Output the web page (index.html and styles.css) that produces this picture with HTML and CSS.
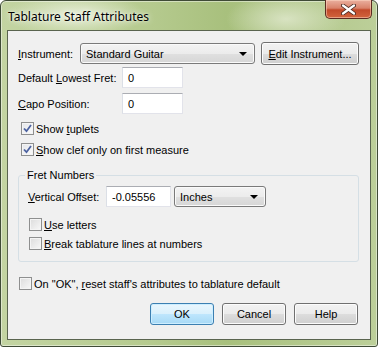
FILE: index.html
```html
<!DOCTYPE html>
<html lang="en">
<head>
    <meta charset="UTF-8">
    <meta name="viewport" content="width=device-width, initial-scale=1.0">
    <title>Tablature Staff Attributes</title>
    <link rel="stylesheet" href="styles.css">
</head>
<body>
    <div class="window">
        <div class="titlebar">
            <span class="title">Tablature Staff Attributes</span>
            <div class="close">
                <svg width="15" height="11" viewBox="0 0 15 11">
                    <path d="M2 1.5 L13 9.5 M13 1.5 L2 9.5" stroke="#4a2a22" stroke-width="4" stroke-linecap="round"/>
                    <path d="M2 1.5 L13 9.5 M13 1.5 L2 9.5" stroke="#ffffff" stroke-width="2.2" stroke-linecap="round"/>
                </svg>
            </div>
        </div>

        <div class="client">
            <div class="row row-top">
                <span class="label"><u>I</u>nstrument:</span>
                <div class="combo combo-instrument">
                    <span>Standard Guitar</span>
                    <i class="arrow"></i>
                </div>
                <div class="btn btn-edit"><u>E</u>dit Instrument...</div>
            </div>

            <div class="row row-field first-field">
                <span class="label label-wide">Default <u>L</u>owest Fret:</span>
                <div class="textbox">0</div>
            </div>
            <div class="row row-field second-field">
                <span class="label label-wide"><u>C</u>apo Position:</span>
                <div class="textbox">0</div>
            </div>

            <div class="check check-tuplets">
                <span class="box checked">
                    <svg width="9" height="9" viewBox="0 0 9 9"><path d="M1 4.5 L3.5 7.2 L8 1" fill="none" stroke="#4c62a0" stroke-width="1.8"/></svg>
                </span>
                <span>Show <u>t</u>uplets</span>
            </div>
            <div class="check check-clef">
                <span class="box checked">
                    <svg width="9" height="9" viewBox="0 0 9 9"><path d="M1 4.5 L3.5 7.2 L8 1" fill="none" stroke="#4c62a0" stroke-width="1.8"/></svg>
                </span>
                <span><u>S</u>how clef only on first measure</span>
            </div>

            <fieldset class="group">
                <legend>Fret Numbers</legend>
                <div class="row row-offset">
                    <span class="label label-offset"><u>V</u>ertical Offset:</span>
                    <div class="textbox textbox-offset">-0.05556</div>
                    <div class="combo combo-units">
                        <span>Inches</span>
                        <i class="arrow"></i>
                    </div>
                </div>
                <div class="check check-letters">
                    <span class="box"></span>
                    <span><u>U</u>se letters</span>
                </div>
                <div class="check check-break">
                    <span class="box"></span>
                    <span><u>B</u>reak tablature lines at numbers</span>
                </div>
            </fieldset>

            <div class="check check-reset">
                <span class="box"></span>
                <span>On "OK", <u>r</u>eset staff's attributes to tablature default</span>
            </div>

            <div class="buttons">
                <div class="btn btn-default">OK</div>
                <div class="btn">Cancel</div>
                <div class="btn">Help</div>
            </div>
        </div>
    </div>
</body>
</html>
```

FILE: styles.css
```css
body {
    margin: 0;
    padding: 0;
    font-family: "Liberation Sans", Arial, sans-serif;
    font-size: 11px;
    color: #000;
    background: #ffffff;
}
u {
    text-decoration: underline;
    text-underline-offset: 1px;
}
.window {
    position: relative;
    width: 378px;
    height: 347px;
    box-sizing: border-box;
    border: 1px solid #3f4b36;
    border-radius: 6px 6px 3px 3px;
    padding: 0 6px 6px 6px;
    background:
        radial-gradient(ellipse 70px 22px at 75px 14px, rgba(236, 242, 222, 0.9), rgba(236, 242, 222, 0) 100%),
        radial-gradient(ellipse 60px 26px at 285px 18px, rgba(226, 234, 208, 0.8), rgba(226, 234, 208, 0) 100%),
        linear-gradient(90deg, #c3d4a2 0%, #b5ca8e 40%, #a8c07d 60%, #bccf99 100%);
    box-shadow: inset 0 0 0 1px rgba(255, 255, 255, 0.45);
}
.titlebar {
    height: 29px;
    display: flex;
    align-items: center;
}
.title {
    font-family: "Noto Sans", "Open Sans", sans-serif;
    font-size: 12px;
    margin-left: 1px;
    margin-top: 1px;
    text-shadow: 0 0 6px rgba(255, 255, 255, 0.9), 0 0 2px rgba(255, 255, 255, 0.8);
}
.close {
    position: absolute;
    top: -1px;
    right: 5px;
    width: 45px;
    height: 18px;
    border: 1px solid #5b2b20;
    border-top: none;
    border-radius: 0 0 5px 5px;
    background: linear-gradient(#eab09f 0%, #d9826a 45%, #c24a2a 55%, #d2643d 100%);
    box-shadow: inset 0 0 0 1px rgba(255, 220, 200, 0.5);
    display: flex;
    align-items: center;
    justify-content: center;
}
.client {
    height: 308px;
    border: 1px solid #59644f;
    background: #f0f0f0;
    padding: 11px 0 0 0;
    box-sizing: content-box;
    height: 297px;
}
.row {
    display: flex;
    align-items: center;
}
.label {
    margin-left: 10px;
}
.row-top {
    height: 23px;
}
.row-top .label {
    width: 62px;
}
.combo {
    box-sizing: border-box;
    height: 21px;
    border: 1px solid #7a7a7a;
    border-radius: 3px;
    background: linear-gradient(#f3f3f3 0%, #ececec 50%, #e0e0e0 51%, #d6d6d6 100%);
    box-shadow: inset 0 0 0 1px #fafafa;
    display: flex;
    align-items: center;
    justify-content: space-between;
    padding: 0 7px 0 5px;
}
.combo-instrument {
    width: 175px;
}
.arrow {
    width: 0;
    height: 0;
    border-left: 4px solid transparent;
    border-right: 4px solid transparent;
    border-top: 4px solid #000;
}
.btn {
    box-sizing: border-box;
    height: 23px;
    border: 1px solid #707070;
    border-radius: 3px;
    background: linear-gradient(#f2f2f2 0%, #ebebeb 50%, #dddddd 51%, #cfcfcf 100%);
    box-shadow: inset 0 0 0 1px #fcfcfc;
    display: flex;
    align-items: center;
    justify-content: center;
}
.btn-edit {
    width: 98px;
    margin-left: 6px;
}
.row-field {
    height: 21px;
}
.first-field {
    margin-top: 2px;
}
.second-field {
    margin-top: 5px;
}
.label-wide {
    width: 104px;
}
.textbox {
    box-sizing: border-box;
    width: 61px;
    height: 21px;
    background: #ffffff;
    border: 1px solid #e2e3ea;
    border-top-color: #abadb3;
    border-left-color: #dbdfe6;
    display: flex;
    align-items: center;
    padding-left: 5px;
}
.check {
    display: flex;
    align-items: center;
    height: 17px;
}
.box {
    box-sizing: border-box;
    width: 13px;
    height: 13px;
    border: 1px solid #8e8f8f;
    background: linear-gradient(135deg, #dcdcdc 0%, #f8f8f8 100%);
    box-shadow: inset 0 0 0 1px #f4f4f4;
    margin-right: 2px;
    display: flex;
    align-items: center;
    justify-content: center;
}
.box.checked {
    background: linear-gradient(135deg, #e4e6ea 0%, #fbfbfb 100%);
}
.check-tuplets {
    margin-top: 6px;
    padding-left: 13px;
}
.check-clef {
    margin-top: 4px;
    padding-left: 13px;
}
.group {
    margin: 10px 10px 0 10px;
    padding: 4px 0 9px 0;
    width: 341px;
    box-sizing: border-box;
    border: 1px solid #d5dfe5;
    border-radius: 3px;
    min-width: 0;
}
.group legend {
    margin-left: 6px;
    padding: 0 2px;
    line-height: 14px;
}
.row-offset {
    height: 21px;
}
.label-offset {
    width: 78px;
    margin-left: 9px;
}
.textbox-offset {
    width: 65px;
}
.combo-units {
    width: 92px;
    margin-left: 3px;
}
.check-letters {
    margin-top: 9px;
    padding-left: 10px;
}
.check-break {
    margin-top: 2px;
    padding-left: 10px;
}
.check-reset {
    margin-top: 13px;
    padding-left: 11px;
}
.buttons {
    display: flex;
    justify-content: flex-end;
    gap: 8px;
    margin-top: 11px;
    padding-right: 12px;
}
.buttons .btn {
    width: 64px;
    height: 22px;
}
.btn-default {
    border-color: #3c7fb1;
    background: linear-gradient(#eaf6fd 0%, #d9f0fc 50%, #bee6fd 51%, #a7d9f5 100%);
    box-shadow: inset 0 0 0 1px #cdeeff;
}
```
